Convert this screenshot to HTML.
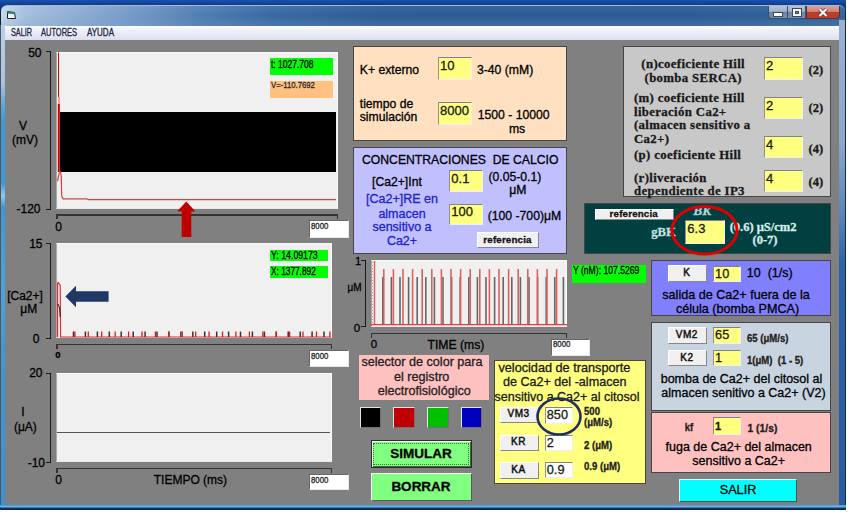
<!DOCTYPE html>
<html><head><meta charset="utf-8"><style>
*{box-sizing:border-box}
html,body{margin:0;padding:0}
body{width:850px;height:516px;overflow:hidden;background:#fff;position:relative;font-family:"Liberation Sans",sans-serif;color:#000}
.a{position:absolute}
.t{position:absolute;white-space:nowrap;line-height:1;-webkit-text-stroke:0.3px currentColor}
.plot{background:#f0f0f0;border-top:1px solid #fafafa;border-right:1px solid #fafafa;border-left:1px solid #a8a8a8;border-bottom:1px solid #e8e8e8}
.tb{background:#fff;border-top:1px solid #666;border-left:1px solid #666;border-right:1px solid #e8e8e8;border-bottom:1px solid #e8e8e8}
.inp{border-top:1px solid #808090;border-left:1px solid #909090;border-right:1px solid #f0f0f0;border-bottom:1px solid #f0f0f0}
.btn{border-top:1px solid #fff;border-left:1px solid #fff;border-right:1.5px solid #888;border-bottom:1.5px solid #888}
.panel{border:1px solid #464646}
</style></head><body>
<div class="a " style="left:0.00px;top:0.00px;width:846.00px;height:24.00px;background:linear-gradient(#1a52b0,#0e3c8c 20%,#0a3070 100%);"></div>
<div class="a " style="left:0.00px;top:4.50px;width:846.00px;height:505.50px;border-radius:7px 7px 0 0;background:#2a5a9a;border:1px solid #0c1e3c;"></div>
<div class="a " style="left:1.00px;top:5.00px;width:844.00px;height:20.50px;border-radius:6px 6px 0 0;border-top:1px solid #a0b4cc;background:linear-gradient(90deg,#c8d8ea 0,#a4bedc 3%,#8aaad2 10%,#6e94c4 17%,#4e7cb0 24%,#386aa2 32%,#2c5c94 45%,#2b5b93 80%,#33639a 100%);"></div>
<div class="a " style="left:1.00px;top:5.00px;width:844.00px;height:20.50px;border-radius:6px 6px 0 0;background:linear-gradient(rgba(255,255,255,.08),rgba(255,255,255,0) 50%,rgba(120,160,200,.25));"></div>
<div class="a " style="left:0.00px;top:25.00px;width:5.50px;height:480.00px;background:linear-gradient(#b8d0ea,#a8c4e4 12%,#6aaadc 16%,#3c98d8 20%,#3c98d8 33%,#90ccf0 35.5%,#3c98d8 38%,#48a4e0 55%,#3d96d6 70%,#3a92d4 100%);border-left:1px solid #555;"></div>
<div class="a " style="left:839.00px;top:20.00px;width:7.00px;height:485.00px;background:linear-gradient(#98b2d0,#8aa8c8 25%,#5a86b8 40%,#2f62a6 50%,#2a5aa0 100%);border-right:1.5px solid #1a2a48;"></div>
<svg class="a" style="left:6px;top:10px" width="11" height="10" viewBox="0 0 11 10"><path d="M1.5 1.5 L8.5 2.5 L9.5 8.5 L1.5 8.5 Z" fill="#f4f4f4" stroke="#222" stroke-width="1"/><path d="M1.5 1.5 L8.5 2.5 L8.8 4.3 L1.5 3.8Z" fill="#2a8a9a"/></svg>
<div class="a " style="left:767.50px;top:5.50px;width:38.50px;height:13.20px;border-radius:0 0 0 4px;border:1px solid #3c4c66;border-top:none;background:linear-gradient(#b4c4d8,#9fb2ca 45%,#6a84a8 50%,#7890b2);"></div>
<div class="a " style="left:787.00px;top:5.50px;width:1.00px;height:13.20px;background:#3c4c66;"></div>
<div class="a " style="left:806.00px;top:5.50px;width:33.70px;height:13.20px;border-radius:0 0 4px 0;border:1px solid #5a3030;border-top:none;background:linear-gradient(#d8a098,#cc8a80 45%,#bc3c26 52%,#b8402c);"></div>
<div class="a" style="left:774px;top:12.5px;width:8px;height:3px;background:#fff;box-shadow:0 0 0 1px #3a4a5a;"></div>
<div class="a" style="left:793px;top:8.5px;width:8px;height:7px;border:2px solid #f4f4f4;box-shadow:0 0 0 1px #3a4a5a, inset 0 0 0 1px #3a4a5a;"></div>
<svg class="a" style="left:816px;top:6.5px" width="14" height="11" viewBox="0 0 14 11"><path d="M3.5 2 L10.5 9 M10.5 2 L3.5 9" stroke="#5a3a3a" stroke-width="3.8"/><path d="M3.5 2 L10.5 9 M10.5 2 L3.5 9" stroke="#f4f4f4" stroke-width="2.2"/></svg>
<div class="a " style="left:5.00px;top:25.50px;width:834.00px;height:14.50px;background:linear-gradient(#fcfcfe,#eceef7 40%,#dcdff0);"></div>
<div class="t" style="left:10.50px;top:27.62px;font-family:'Liberation Sans',sans-serif;font-size:10px;font-weight:normal;color:#1b2540;transform:scaleX(0.73);transform-origin:0 0;">SALIR</div>
<div class="t" style="left:41.20px;top:27.62px;font-family:'Liberation Sans',sans-serif;font-size:10px;font-weight:normal;color:#1b2540;transform:scaleX(0.75);transform-origin:0 0;">AUTORES</div>
<div class="t" style="left:86.90px;top:27.62px;font-family:'Liberation Sans',sans-serif;font-size:10px;font-weight:normal;color:#1b2540;transform:scaleX(0.8);transform-origin:0 0;">AYUDA</div>
<div class="a " style="left:5.00px;top:40.00px;width:834.00px;height:465.00px;background:#808080;"></div>
<div class="a " style="left:0.00px;top:504.50px;width:846.00px;height:5.50px;background:linear-gradient(#4a9ad8,#6ab8f0 40%,#1a3a6a 60%,#0c1c38);border-radius:0 0 4px 4px;"></div>
<div class="a " style="left:50.00px;top:51.00px;width:1.00px;height:159.00px;background:#1a1a1a;"></div>
<div class="a " style="left:46.00px;top:51.00px;width:5.00px;height:1.00px;background:#1a1a1a;"></div>
<div class="a " style="left:46.00px;top:209.00px;width:5.00px;height:1.00px;background:#1a1a1a;"></div>
<div class="t" style="right:808.50px;top:47.14px;font-family:'Liberation Sans',sans-serif;font-size:12px;font-weight:normal;color:#000;">50</div>
<div class="t" style="right:809.50px;top:203.14px;font-family:'Liberation Sans',sans-serif;font-size:12px;font-weight:normal;color:#000;">-120</div>
<div class="t" style="left:23.00px;top:120.14px;font-family:'Liberation Sans',sans-serif;font-size:12px;font-weight:normal;color:#000;transform:translateX(-50%) ;transform-origin:0 0;">V</div>
<div class="t" style="left:25.00px;top:134.14px;font-family:'Liberation Sans',sans-serif;font-size:12px;font-weight:normal;color:#000;transform:translateX(-50%) ;transform-origin:0 0;">(mV)</div>
<div class="a plot" style="left:56.00px;top:52.00px;width:282.00px;height:157.00px;"></div>
<div class="a " style="left:60.00px;top:112.40px;width:276.00px;height:59.60px;background:#000;"></div>
<div class="a " style="left:270.30px;top:58.10px;width:63.00px;height:17.40px;background:#00ff00;"></div>
<div class="t" style="left:270.60px;top:60.02px;font-family:'Liberation Sans',sans-serif;font-size:10px;font-weight:normal;color:#000;transform:scaleX(0.85);transform-origin:0 0;">t: 1027.708</div>
<div class="a " style="left:270.30px;top:80.90px;width:63.00px;height:17.20px;background:#ffc080;"></div>
<div class="t" style="left:270.60px;top:81.46px;font-family:'Liberation Sans',sans-serif;font-size:9.3px;font-weight:normal;color:#2a2a2a;transform:scaleX(0.83);transform-origin:0 0;">V=-110.7692</div>
<div class="a " style="left:56.00px;top:214.00px;width:282.00px;height:1.50px;background:#333;"></div>
<div class="a " style="left:56.00px;top:214.00px;width:1.50px;height:5.00px;background:#333;"></div>
<div class="a " style="left:336.50px;top:214.00px;width:1.50px;height:5.00px;background:#333;"></div>
<div class="t" style="left:58.50px;top:221.14px;font-family:'Liberation Sans',sans-serif;font-size:12px;font-weight:normal;color:#000;transform:translateX(-50%) ;transform-origin:0 0;">0</div>
<div class="a tb" style="left:309.00px;top:220.00px;width:40.00px;height:18.00px;"></div>
<div class="t" style="left:311.00px;top:221.91px;font-family:'Liberation Sans',sans-serif;font-size:9px;font-weight:normal;color:#222;transform:scaleX(0.87);transform-origin:0 0;">8000</div>
<div class="a " style="left:50.00px;top:243.00px;width:1.00px;height:96.00px;background:#1a1a1a;"></div>
<div class="a " style="left:46.00px;top:243.00px;width:5.00px;height:1.00px;background:#1a1a1a;"></div>
<div class="a " style="left:46.00px;top:338.00px;width:5.00px;height:1.00px;background:#1a1a1a;"></div>
<div class="t" style="right:807.50px;top:238.14px;font-family:'Liberation Sans',sans-serif;font-size:12px;font-weight:normal;color:#000;">15</div>
<div class="t" style="right:810.50px;top:333.39px;font-family:'Liberation Sans',sans-serif;font-size:12px;font-weight:normal;color:#000;">0</div>
<div class="t" style="left:25.00px;top:289.64px;font-family:'Liberation Sans',sans-serif;font-size:12px;font-weight:normal;color:#000;transform:translateX(-50%) ;transform-origin:0 0;">[Ca2+]</div>
<div class="t" style="left:28.75px;top:303.14px;font-family:'Liberation Sans',sans-serif;font-size:12px;font-weight:normal;color:#000;transform:translateX(-50%) ;transform-origin:0 0;">μM</div>
<div class="a plot" style="left:56.00px;top:243.00px;width:276.00px;height:95.00px;"></div>
<div class="a " style="left:270.30px;top:250.00px;width:57.50px;height:11.00px;background:#00ff00;"></div>
<div class="t" style="left:270.60px;top:250.72px;font-family:'Liberation Sans',sans-serif;font-size:10px;font-weight:normal;color:#000;transform:scaleX(0.875);transform-origin:0 0;">Y: 14.09173</div>
<div class="a " style="left:270.30px;top:266.30px;width:57.50px;height:11.70px;background:#00ff00;"></div>
<div class="t" style="left:270.60px;top:267.12px;font-family:'Liberation Sans',sans-serif;font-size:10px;font-weight:normal;color:#000;transform:scaleX(0.83);transform-origin:0 0;">X: 1377.892</div>
<div class="a " style="left:56.00px;top:343.50px;width:276.00px;height:1.50px;background:#333;"></div>
<div class="a " style="left:56.00px;top:343.50px;width:1.50px;height:5.00px;background:#333;"></div>
<div class="a " style="left:330.50px;top:343.50px;width:1.50px;height:5.00px;background:#333;"></div>
<div class="t" style="left:58.00px;top:350.36px;font-family:'Liberation Sans',sans-serif;font-size:9.5px;font-weight:bold;color:#000;transform:translateX(-50%) ;transform-origin:0 0;">0</div>
<div class="a tb" style="left:309.00px;top:350.00px;width:40.00px;height:17.00px;"></div>
<div class="t" style="left:311.00px;top:351.91px;font-family:'Liberation Sans',sans-serif;font-size:9px;font-weight:normal;color:#222;transform:scaleX(0.87);transform-origin:0 0;">8000</div>
<div class="a " style="left:50.00px;top:373.00px;width:1.00px;height:90.00px;background:#1a1a1a;"></div>
<div class="a " style="left:46.00px;top:373.00px;width:5.00px;height:1.00px;background:#1a1a1a;"></div>
<div class="a " style="left:46.00px;top:462.00px;width:5.00px;height:1.00px;background:#1a1a1a;"></div>
<div class="t" style="right:807.50px;top:367.14px;font-family:'Liberation Sans',sans-serif;font-size:12px;font-weight:normal;color:#000;">20</div>
<div class="t" style="right:805.00px;top:457.39px;font-family:'Liberation Sans',sans-serif;font-size:12px;font-weight:normal;color:#000;">-10</div>
<div class="t" style="left:23.00px;top:406.14px;font-family:'Liberation Sans',sans-serif;font-size:12px;font-weight:normal;color:#000;transform:translateX(-50%) ;transform-origin:0 0;">I</div>
<div class="t" style="left:25.40px;top:421.14px;font-family:'Liberation Sans',sans-serif;font-size:12px;font-weight:normal;color:#000;transform:translateX(-50%) ;transform-origin:0 0;">(μA)</div>
<div class="a plot" style="left:56.00px;top:373.00px;width:276.00px;height:89.00px;"></div>
<div class="a " style="left:57.00px;top:431.50px;width:273.00px;height:1.20px;background:#555;"></div>
<div class="a " style="left:56.00px;top:467.50px;width:276.00px;height:1.50px;background:#333;"></div>
<div class="a " style="left:56.00px;top:467.50px;width:1.50px;height:5.00px;background:#333;"></div>
<div class="a " style="left:330.50px;top:467.50px;width:1.50px;height:5.00px;background:#333;"></div>
<div class="t" style="left:58.50px;top:474.14px;font-family:'Liberation Sans',sans-serif;font-size:12px;font-weight:normal;color:#000;transform:translateX(-50%) ;transform-origin:0 0;">0</div>
<div class="t" style="left:153.75px;top:474.14px;font-family:'Liberation Sans',sans-serif;font-size:12px;font-weight:normal;color:#000;">TIEMPO (ms)</div>
<div class="a tb" style="left:309.00px;top:474.00px;width:40.00px;height:16.00px;"></div>
<div class="t" style="left:311.00px;top:475.91px;font-family:'Liberation Sans',sans-serif;font-size:9px;font-weight:normal;color:#222;transform:scaleX(0.87);transform-origin:0 0;">8000</div>
<div class="a panel" style="left:353.00px;top:45.50px;width:214.00px;height:95.50px;background:#ffe0c0;"></div>
<div class="t" style="left:359.75px;top:63.55px;font-family:'Liberation Sans',sans-serif;font-size:12.2px;font-weight:normal;color:#000;">K+ externo</div>
<div class="a inp" style="left:437.75px;top:57.00px;width:33.75px;height:22.50px;background:#ffff80;"></div>
<div class="t" style="left:440.05px;top:58.86px;font-family:'Liberation Sans',sans-serif;font-size:13px;font-weight:normal;color:#1a1a10;">10</div>
<div class="t" style="left:477.00px;top:64.05px;font-family:'Liberation Sans',sans-serif;font-size:12.2px;font-weight:normal;color:#000;">3-40 (mM)</div>
<div class="t" style="left:359.75px;top:97.75px;font-family:'Liberation Sans',sans-serif;font-size:12.2px;font-weight:normal;color:#000;">tiempo de</div>
<div class="t" style="left:359.75px;top:110.75px;font-family:'Liberation Sans',sans-serif;font-size:12.2px;font-weight:normal;color:#000;">simulación</div>
<div class="a inp" style="left:437.75px;top:102.00px;width:33.75px;height:22.50px;background:#ffff80;"></div>
<div class="t" style="left:440.05px;top:103.86px;font-family:'Liberation Sans',sans-serif;font-size:13px;font-weight:normal;color:#1a1a10;">8000</div>
<div class="t" style="left:477.75px;top:108.55px;font-family:'Liberation Sans',sans-serif;font-size:12.2px;font-weight:normal;color:#000;">1500 - 10000</div>
<div class="t" style="left:517.00px;top:123.05px;font-family:'Liberation Sans',sans-serif;font-size:12.2px;font-weight:normal;color:#000;transform:translateX(-50%) ;transform-origin:0 0;">ms</div>
<div class="a panel" style="left:353.00px;top:147.00px;width:214.00px;height:106.50px;background:#c0c0ff;"></div>
<div class="t" style="left:362.00px;top:153.55px;font-family:'Liberation Sans',sans-serif;font-size:12.2px;font-weight:normal;color:#000;">CONCENTRACIONES&nbsp; DE CALCIO</div>
<div class="t" style="left:372.00px;top:176.05px;font-family:'Liberation Sans',sans-serif;font-size:12.2px;font-weight:normal;color:#000;">[Ca2+]Int</div>
<div class="a inp" style="left:449.00px;top:170.25px;width:33.75px;height:21.75px;background:#ffff80;"></div>
<div class="t" style="left:451.30px;top:172.11px;font-family:'Liberation Sans',sans-serif;font-size:13px;font-weight:normal;color:#1a1a10;">0.1</div>
<div class="t" style="left:488.50px;top:170.55px;font-family:'Liberation Sans',sans-serif;font-size:12.2px;font-weight:normal;color:#000;">(0.05-0.1)</div>
<div class="t" style="left:517.75px;top:184.05px;font-family:'Liberation Sans',sans-serif;font-size:12.2px;font-weight:normal;color:#000;transform:translateX(-50%) ;transform-origin:0 0;">μM</div>
<div class="t" style="left:402.00px;top:193.40px;font-family:'Liberation Sans',sans-serif;font-size:12.5px;font-weight:normal;color:#2222cc;transform:translateX(-50%) ;transform-origin:0 0;">[Ca2+]RE en</div>
<div class="t" style="left:402.00px;top:207.90px;font-family:'Liberation Sans',sans-serif;font-size:12.5px;font-weight:normal;color:#2222cc;transform:translateX(-50%) ;transform-origin:0 0;">almacen</div>
<div class="t" style="left:402.00px;top:220.90px;font-family:'Liberation Sans',sans-serif;font-size:12.5px;font-weight:normal;color:#2222cc;transform:translateX(-50%) ;transform-origin:0 0;">sensitivo a</div>
<div class="t" style="left:402.00px;top:235.40px;font-family:'Liberation Sans',sans-serif;font-size:12.5px;font-weight:normal;color:#2222cc;transform:translateX(-50%) ;transform-origin:0 0;">Ca2+</div>
<div class="a inp" style="left:449.00px;top:203.50px;width:33.75px;height:21.75px;background:#ffff80;"></div>
<div class="t" style="left:451.30px;top:205.36px;font-family:'Liberation Sans',sans-serif;font-size:13px;font-weight:normal;color:#1a1a10;">100</div>
<div class="t" style="left:487.75px;top:209.80px;font-family:'Liberation Sans',sans-serif;font-size:12.2px;font-weight:normal;color:#000;">(100 -700)μM</div>
<div class="a btn" style="left:477.00px;top:231.50px;width:62.00px;height:16.75px;background:#f0f0f0;"></div>
<div class="t" style="left:507.50px;top:234.59px;font-family:'Liberation Sans',sans-serif;font-size:9.8px;font-weight:bold;color:#111;letter-spacing:0.15px;transform:translateX(-50%) ;transform-origin:0 0;">referencia</div>
<div class="a " style="left:364.50px;top:259.50px;width:1.00px;height:67.50px;background:#1a1a1a;"></div>
<div class="a " style="left:361.00px;top:259.50px;width:4.50px;height:1.00px;background:#1a1a1a;"></div>
<div class="a " style="left:361.00px;top:326.00px;width:4.50px;height:1.00px;background:#1a1a1a;"></div>
<div class="t" style="left:358.00px;top:255.63px;font-family:'Liberation Sans',sans-serif;font-size:11px;font-weight:normal;color:#000;transform:translateX(-50%) ;transform-origin:0 0;">1</div>
<div class="t" style="left:357.00px;top:322.89px;font-family:'Liberation Sans',sans-serif;font-size:11.5px;font-weight:normal;color:#000;transform:translateX(-50%) ;transform-origin:0 0;">0</div>
<div class="t" style="left:354.60px;top:283.12px;font-family:'Liberation Sans',sans-serif;font-size:10px;font-weight:normal;color:#000;transform:translateX(-50%) ;transform-origin:0 0;">μM</div>
<div class="a plot" style="left:370.50px;top:260.00px;width:196.80px;height:66.50px;"></div>
<div class="a " style="left:370.50px;top:332.50px;width:196.80px;height:1.50px;background:#333;"></div>
<div class="a " style="left:370.50px;top:332.50px;width:1.50px;height:5.00px;background:#333;"></div>
<div class="a " style="left:565.80px;top:332.50px;width:1.50px;height:5.00px;background:#333;"></div>
<div class="t" style="left:373.90px;top:338.99px;font-family:'Liberation Sans',sans-serif;font-size:11.5px;font-weight:normal;color:#000;transform:translateX(-50%) ;transform-origin:0 0;">0</div>
<div class="t" style="left:427.50px;top:339.05px;font-family:'Liberation Sans',sans-serif;font-size:12.2px;font-weight:normal;color:#000;">TIME (ms)</div>
<div class="a tb" style="left:551.00px;top:338.50px;width:38.50px;height:17.00px;"></div>
<div class="t" style="left:553.00px;top:340.41px;font-family:'Liberation Sans',sans-serif;font-size:9px;font-weight:normal;color:#222;transform:scaleX(0.87);transform-origin:0 0;">8000</div>
<div class="a " style="left:572.00px;top:265.00px;width:74.00px;height:17.70px;background:#00ff00;"></div>
<div class="t" style="left:572.50px;top:266.12px;font-family:'Liberation Sans',sans-serif;font-size:10px;font-weight:normal;color:#000;transform:scaleX(0.86);transform-origin:0 0;">Y (nM): 107.5269</div>
<div class="a " style="left:358.60px;top:355.00px;width:130.70px;height:45.20px;background:#ffc0c0;"></div>
<div class="t" style="left:422.00px;top:356.35px;font-family:'Liberation Sans',sans-serif;font-size:12.6px;font-weight:normal;color:#222;transform:translateX(-50%) ;transform-origin:0 0;">selector de color para</div>
<div class="t" style="left:421.70px;top:370.60px;font-family:'Liberation Sans',sans-serif;font-size:12.6px;font-weight:normal;color:#222;transform:translateX(-50%) ;transform-origin:0 0;">el registro</div>
<div class="t" style="left:424.20px;top:384.60px;font-family:'Liberation Sans',sans-serif;font-size:12.6px;font-weight:normal;color:#222;transform:translateX(-50%) ;transform-origin:0 0;">electrofisiológico</div>
<div class="a " style="left:359.50px;top:406.50px;width:21.75px;height:21.25px;background:#000;border:1.5px solid #e4e4e4;border-right-color:#707070;border-bottom-color:#707070;"></div>
<div class="a " style="left:392.50px;top:406.50px;width:22.50px;height:21.25px;background:#c00000;border:1.5px solid #e4e4e4;border-right-color:#707070;border-bottom-color:#707070;"></div>
<div class="a " style="left:427.00px;top:406.50px;width:22.00px;height:21.25px;background:#00c000;border:1.5px solid #e4e4e4;border-right-color:#707070;border-bottom-color:#707070;"></div>
<div class="a " style="left:460.75px;top:406.50px;width:21.50px;height:21.25px;background:#0000c0;border:1.5px solid #e4e4e4;border-right-color:#707070;border-bottom-color:#707070;"></div>
<div class="a " style="left:370.50px;top:439.70px;width:101.00px;height:28.10px;background:#80ff80;border:1px solid #2a2a2a;box-shadow:inset 1px 1px #f0fff0, inset -1px -1px #3a6a3a;"></div>
<div class="a " style="left:373.30px;top:442.50px;width:95.40px;height:22.50px;border:1px dotted #446644;"></div>
<div class="t" style="left:421.00px;top:446.91px;font-family:'Liberation Sans',sans-serif;font-size:13.5px;font-weight:bold;color:#000;transform:translateX(-50%) ;transform-origin:0 0;">SIMULAR</div>
<div class="a " style="left:370.50px;top:473.30px;width:101.00px;height:27.90px;background:#80ff80;border-top:1.5px solid #f4f4f4;border-left:1.5px solid #f4f4f4;border-right:1.5px solid #5a5a5a;border-bottom:1.5px solid #5a5a5a;"></div>
<div class="t" style="left:421.00px;top:480.41px;font-family:'Liberation Sans',sans-serif;font-size:13.5px;font-weight:bold;color:#000;transform:translateX(-50%) ;transform-origin:0 0;">BORRAR</div>
<div class="a panel" style="left:493.50px;top:360.00px;width:152.10px;height:124.00px;background:#ffff80;"></div>
<div class="t" style="left:564.40px;top:361.80px;font-family:'Liberation Sans',sans-serif;font-size:12.7px;font-weight:normal;color:#1a1a1a;transform:translateX(-50%) ;transform-origin:0 0;">velocidad de transporte</div>
<div class="t" style="left:564.70px;top:375.60px;font-family:'Liberation Sans',sans-serif;font-size:12.6px;font-weight:normal;color:#1a1a1a;transform:translateX(-50%) ;transform-origin:0 0;">de Ca2+ del -almacen</div>
<div class="t" style="left:567.00px;top:390.90px;font-family:'Liberation Sans',sans-serif;font-size:12.5px;font-weight:normal;color:#1a1a1a;transform:translateX(-50%) ;transform-origin:0 0;">sensitivo a Ca2+ al citosol</div>
<div class="a btn" style="left:499.50px;top:406.50px;width:39.00px;height:16.25px;background:#f0f0f0;"></div>
<div class="t" style="left:518.50px;top:409.25px;font-family:'Liberation Sans',sans-serif;font-size:10px;font-weight:normal;color:#111;letter-spacing:0.5px;transform:translateX(-50%) ;transform-origin:0 0;-webkit-text-stroke:0.45px currentColor">VM3</div>
<div class="a inp" style="left:544.50px;top:406.50px;width:28.25px;height:17.50px;background:#fff;"></div>
<div class="t" style="left:546.80px;top:408.50px;font-family:'Liberation Sans',sans-serif;font-size:12.7px;font-weight:normal;color:#1a1a10;">850</div>
<div class="t" style="left:584.00px;top:407.42px;font-family:'Liberation Sans',sans-serif;font-size:10.4px;font-weight:bold;color:#222;transform:scaleX(0.92);transform-origin:0 0;">500</div>
<div class="t" style="left:584.00px;top:418.22px;font-family:'Liberation Sans',sans-serif;font-size:10.4px;font-weight:bold;color:#222;transform:scaleX(0.92);transform-origin:0 0;">(μM/s)</div>
<div class="a btn" style="left:499.50px;top:434.50px;width:39.00px;height:16.25px;background:#f0f0f0;"></div>
<div class="t" style="left:518.50px;top:437.25px;font-family:'Liberation Sans',sans-serif;font-size:10px;font-weight:normal;color:#111;letter-spacing:0.5px;transform:translateX(-50%) ;transform-origin:0 0;-webkit-text-stroke:0.45px currentColor">KR</div>
<div class="a inp" style="left:544.50px;top:434.50px;width:28.25px;height:16.25px;background:#fff;"></div>
<div class="t" style="left:546.80px;top:436.50px;font-family:'Liberation Sans',sans-serif;font-size:12.7px;font-weight:normal;color:#1a1a10;">2</div>
<div class="t" style="left:584.00px;top:440.62px;font-family:'Liberation Sans',sans-serif;font-size:10.4px;font-weight:bold;color:#222;transform:scaleX(0.92);transform-origin:0 0;">2 (μM)</div>
<div class="a btn" style="left:499.50px;top:462.00px;width:39.00px;height:17.00px;background:#f0f0f0;"></div>
<div class="t" style="left:518.50px;top:465.12px;font-family:'Liberation Sans',sans-serif;font-size:10px;font-weight:normal;color:#111;letter-spacing:0.5px;transform:translateX(-50%) ;transform-origin:0 0;-webkit-text-stroke:0.45px currentColor">KA</div>
<div class="a inp" style="left:544.50px;top:462.00px;width:28.25px;height:16.25px;background:#fff;"></div>
<div class="t" style="left:546.80px;top:464.00px;font-family:'Liberation Sans',sans-serif;font-size:12.7px;font-weight:normal;color:#1a1a10;">0.9</div>
<div class="t" style="left:584.00px;top:462.32px;font-family:'Liberation Sans',sans-serif;font-size:10.4px;font-weight:bold;color:#222;transform:scaleX(0.92);transform-origin:0 0;">0.9 (μM)</div>
<div class="a panel" style="left:622.75px;top:45.50px;width:208.25px;height:151.50px;background:#c8c8c8;"></div>
<div class="t" style="left:693.20px;top:58.32px;font-family:'Liberation Serif',serif;font-size:12.8px;font-weight:bold;color:#1a1a1a;letter-spacing:0.35px;transform:translateX(-50%) ;transform-origin:0 0;">(n)coeficiente Hill</div>
<div class="t" style="left:693.20px;top:71.92px;font-family:'Liberation Serif',serif;font-size:12.8px;font-weight:bold;color:#1a1a1a;letter-spacing:0.35px;transform:translateX(-50%) ;transform-origin:0 0;">(bomba SERCA)</div>
<div class="t" style="left:634.00px;top:92.42px;font-family:'Liberation Serif',serif;font-size:12.8px;font-weight:bold;color:#1a1a1a;letter-spacing:0.35px;">(m) coeficiente Hill</div>
<div class="t" style="left:634.00px;top:105.52px;font-family:'Liberation Serif',serif;font-size:12.8px;font-weight:bold;color:#1a1a1a;letter-spacing:0.35px;">liberación Ca2+</div>
<div class="t" style="left:634.00px;top:119.42px;font-family:'Liberation Serif',serif;font-size:12.8px;font-weight:bold;color:#1a1a1a;letter-spacing:0.35px;">(almacen sensitivo a</div>
<div class="t" style="left:634.00px;top:133.32px;font-family:'Liberation Serif',serif;font-size:12.8px;font-weight:bold;color:#1a1a1a;letter-spacing:0.35px;">Ca2+)</div>
<div class="t" style="left:634.00px;top:148.92px;font-family:'Liberation Serif',serif;font-size:12.8px;font-weight:bold;color:#1a1a1a;letter-spacing:0.35px;">(p) coeficiente Hill</div>
<div class="t" style="left:634.00px;top:171.62px;font-family:'Liberation Serif',serif;font-size:12.8px;font-weight:bold;color:#1a1a1a;letter-spacing:0.35px;">(r)liveración</div>
<div class="t" style="left:634.00px;top:184.92px;font-family:'Liberation Serif',serif;font-size:12.8px;font-weight:bold;color:#1a1a1a;letter-spacing:0.35px;">dependiente de IP3</div>
<div class="a inp" style="left:763.70px;top:57.40px;width:39.30px;height:22.60px;background:#ffff80;"></div>
<div class="t" style="left:766.00px;top:59.26px;font-family:'Liberation Sans',sans-serif;font-size:13px;font-weight:normal;color:#1a1a10;">2</div>
<div class="t" style="left:808.50px;top:63.67px;font-family:'Liberation Serif',serif;font-size:12.5px;font-weight:bold;color:#1a1a1a;">(2)</div>
<div class="a inp" style="left:763.70px;top:97.00px;width:39.30px;height:22.00px;background:#ffff80;"></div>
<div class="t" style="left:766.00px;top:98.86px;font-family:'Liberation Sans',sans-serif;font-size:13px;font-weight:normal;color:#1a1a10;">2</div>
<div class="t" style="left:808.50px;top:101.67px;font-family:'Liberation Serif',serif;font-size:12.5px;font-weight:bold;color:#1a1a1a;">(2)</div>
<div class="a inp" style="left:763.70px;top:136.00px;width:39.30px;height:22.00px;background:#ffff80;"></div>
<div class="t" style="left:766.00px;top:137.86px;font-family:'Liberation Sans',sans-serif;font-size:13px;font-weight:normal;color:#1a1a10;">4</div>
<div class="t" style="left:808.50px;top:142.67px;font-family:'Liberation Serif',serif;font-size:12.5px;font-weight:bold;color:#1a1a1a;">(4)</div>
<div class="a inp" style="left:763.70px;top:169.80px;width:39.30px;height:22.20px;background:#ffff80;"></div>
<div class="t" style="left:766.00px;top:171.66px;font-family:'Liberation Sans',sans-serif;font-size:13px;font-weight:normal;color:#1a1a10;">4</div>
<div class="t" style="left:808.50px;top:176.07px;font-family:'Liberation Serif',serif;font-size:12.5px;font-weight:bold;color:#1a1a1a;">(4)</div>
<div class="a panel" style="left:583.50px;top:202.75px;width:247.50px;height:50.95px;background:#004040;"></div>
<div class="a btn" style="left:594.75px;top:208.50px;width:79.05px;height:11.50px;background:#f0f0f0;"></div>
<div class="t" style="left:633.77px;top:208.97px;font-family:'Liberation Sans',sans-serif;font-size:9.8px;font-weight:bold;color:#111;letter-spacing:0.15px;transform:translateX(-50%) ;transform-origin:0 0;">referencia</div>
<div class="t" style="left:702.20px;top:204.46px;font-family:'Liberation Serif',serif;font-size:13.5px;font-weight:bold;color:#a8d8d8;font-style:italic;transform:translateX(-50%) ;transform-origin:0 0;">BK</div>
<div class="t" style="left:663.50px;top:225.92px;font-family:'Liberation Serif',serif;font-size:12.6px;font-weight:bold;color:#c4e0e0;transform:translateX(-50%) ;transform-origin:0 0;">gBK</div>
<div class="a inp" style="left:685.00px;top:220.20px;width:39.70px;height:24.20px;background:#ffff80;"></div>
<div class="t" style="left:687.30px;top:222.16px;font-family:'Liberation Sans',sans-serif;font-size:13px;font-weight:normal;color:#1a1a10;">6.3</div>
<div class="t" style="left:729.70px;top:220.87px;font-family:'Liberation Serif',serif;font-size:12.5px;font-weight:bold;color:#d8ecec;">(0.6) μS/cm2</div>
<div class="t" style="left:765.00px;top:234.27px;font-family:'Liberation Serif',serif;font-size:12.5px;font-weight:bold;color:#d8ecec;transform:translateX(-50%) ;transform-origin:0 0;">(0-7)</div>
<div class="a panel" style="left:651.00px;top:260.00px;width:180.00px;height:56.00px;background:#8080ff;"></div>
<div class="a btn" style="left:667.50px;top:265.00px;width:39.80px;height:17.00px;background:#f0f0f0;"></div>
<div class="t" style="left:686.90px;top:268.12px;font-family:'Liberation Sans',sans-serif;font-size:10px;font-weight:normal;color:#111;letter-spacing:0.5px;transform:translateX(-50%) ;transform-origin:0 0;-webkit-text-stroke:0.45px currentColor">K</div>
<div class="a inp" style="left:712.80px;top:265.50px;width:28.50px;height:16.90px;background:#ffff80;"></div>
<div class="t" style="left:715.10px;top:267.50px;font-family:'Liberation Sans',sans-serif;font-size:12.7px;font-weight:normal;color:#1a1a10;">10</div>
<div class="t" style="left:746.80px;top:266.50px;font-family:'Liberation Sans',sans-serif;font-size:12.5px;font-weight:normal;color:#000;">10&nbsp; (1/s)</div>
<div class="t" style="left:736.00px;top:289.15px;font-family:'Liberation Sans',sans-serif;font-size:12.6px;font-weight:normal;color:#000;transform:translateX(-50%) ;transform-origin:0 0;">salida de Ca2+ fuera de la</div>
<div class="t" style="left:737.50px;top:302.85px;font-family:'Liberation Sans',sans-serif;font-size:12.6px;font-weight:normal;color:#000;transform:translateX(-50%) ;transform-origin:0 0;">célula (bomba PMCA)</div>
<div class="a panel" style="left:651.00px;top:322.00px;width:180.00px;height:89.00px;background:#c8d4e0;"></div>
<div class="a btn" style="left:667.50px;top:327.30px;width:39.80px;height:16.30px;background:#f0f0f0;"></div>
<div class="t" style="left:686.90px;top:330.07px;font-family:'Liberation Sans',sans-serif;font-size:10px;font-weight:normal;color:#111;letter-spacing:0.5px;transform:translateX(-50%) ;transform-origin:0 0;-webkit-text-stroke:0.45px currentColor">VM2</div>
<div class="a inp" style="left:712.80px;top:327.30px;width:28.50px;height:16.30px;background:#ffff80;"></div>
<div class="t" style="left:715.10px;top:329.30px;font-family:'Liberation Sans',sans-serif;font-size:12.7px;font-weight:normal;color:#1a1a10;">65</div>
<div class="t" style="left:746.60px;top:333.62px;font-family:'Liberation Sans',sans-serif;font-size:10.4px;font-weight:bold;color:#222;transform:scaleX(0.92);transform-origin:0 0;">65 (μM/s)</div>
<div class="a btn" style="left:667.50px;top:350.00px;width:39.80px;height:16.30px;background:#f0f0f0;"></div>
<div class="t" style="left:686.90px;top:352.77px;font-family:'Liberation Sans',sans-serif;font-size:10px;font-weight:normal;color:#111;letter-spacing:0.5px;transform:translateX(-50%) ;transform-origin:0 0;-webkit-text-stroke:0.45px currentColor">K2</div>
<div class="a inp" style="left:712.80px;top:350.00px;width:28.50px;height:16.30px;background:#ffff80;"></div>
<div class="t" style="left:715.10px;top:352.00px;font-family:'Liberation Sans',sans-serif;font-size:12.7px;font-weight:normal;color:#1a1a10;">1</div>
<div class="t" style="left:746.60px;top:356.42px;font-family:'Liberation Sans',sans-serif;font-size:10.4px;font-weight:bold;color:#222;transform:scaleX(0.92);transform-origin:0 0;">1(μM)&nbsp; (1 - 5)</div>
<div class="t" style="left:741.50px;top:373.30px;font-family:'Liberation Sans',sans-serif;font-size:12.5px;font-weight:normal;color:#000;transform:translateX(-50%) ;transform-origin:0 0;">bomba de Ca2+ del citosol al</div>
<div class="t" style="left:743.50px;top:387.20px;font-family:'Liberation Sans',sans-serif;font-size:12.5px;font-weight:normal;color:#000;transform:translateX(-50%) ;transform-origin:0 0;">almacen senitivo a Ca2+ (V2)</div>
<div class="a panel" style="left:651.00px;top:411.70px;width:180.00px;height:61.40px;background:#ffc0c0;"></div>
<div class="t" style="left:689.00px;top:423.42px;font-family:'Liberation Sans',sans-serif;font-size:10.4px;font-weight:bold;color:#222;transform:translateX(-50%) scaleX(0.92);transform-origin:50% 0;">kf</div>
<div class="a inp" style="left:712.60px;top:417.30px;width:28.30px;height:17.60px;background:#ffff80;"></div>
<div class="t" style="left:714.90px;top:421.03px;font-family:'Liberation Sans',sans-serif;font-size:11px;font-weight:bold;color:#1a1a10;">1</div>
<div class="t" style="left:747.40px;top:423.52px;font-family:'Liberation Sans',sans-serif;font-size:10.2px;font-weight:bold;color:#222;letter-spacing:0.1px;">1 (1/s)</div>
<div class="t" style="left:738.70px;top:440.90px;font-family:'Liberation Sans',sans-serif;font-size:12.5px;font-weight:normal;color:#000;transform:translateX(-50%) ;transform-origin:0 0;">fuga de Ca2+ del almacen</div>
<div class="t" style="left:738.70px;top:454.70px;font-family:'Liberation Sans',sans-serif;font-size:12.5px;font-weight:normal;color:#000;transform:translateX(-50%) ;transform-origin:0 0;">sensitivo a Ca2+</div>
<div class="a " style="left:678.80px;top:479.00px;width:118.40px;height:22.60px;background:#00ffff;border-top:1px solid #e0ffff;border-left:1px solid #e0ffff;border-right:1px solid #505050;border-bottom:1px solid #505050;"></div>
<div class="t" style="left:738.00px;top:484.10px;font-family:'Liberation Sans',sans-serif;font-size:12.7px;font-weight:normal;color:#000;transform:translateX(-50%) ;transform-origin:0 0;">SALIR</div>
<svg class="a" style="left:0;top:0" width="850" height="516" viewBox="0 0 850 516">
<path d="M58.5 52.5 L58.5 100" stroke="#e00000" stroke-width="1"/>
<path d="M59 97 L59 112" stroke="#f0a0a0" stroke-width="2"/>
<path d="M58.8 104 L58.8 172" stroke="#d00000" stroke-width="2"/>
<path d="M57.5 181 L59 174 L60.5 172 L61.3 176 L61.7 196 L63 198.8 L87 198.8 L88 199.6 L336 199.6" fill="none" stroke="#d84040" stroke-width="1.2"/>
<path d="M57.6 337 L57.6 283 L58.4 282.5 L60.2 285.5 L60.6 337 L331 337" fill="none" stroke="#d83030" stroke-width="1.2"/>
<path d="M58 304 L59.6 308 L60.2 317" fill="none" stroke="#222" stroke-width="1"/>
<line x1="73.5" y1="331.5" x2="73.5" y2="337" stroke="#333" stroke-width="1.5"/>
<line x1="85.4" y1="331.5" x2="85.4" y2="337" stroke="#333" stroke-width="1.5"/>
<line x1="97.4" y1="331.5" x2="97.4" y2="337" stroke="#333" stroke-width="1.5"/>
<line x1="109.3" y1="331.5" x2="109.3" y2="337" stroke="#333" stroke-width="1.5"/>
<line x1="121.2" y1="331.5" x2="121.2" y2="337" stroke="#333" stroke-width="1.5"/>
<line x1="133.2" y1="331.5" x2="133.2" y2="337" stroke="#333" stroke-width="1.5"/>
<line x1="145.1" y1="331.5" x2="145.1" y2="337" stroke="#333" stroke-width="1.5"/>
<line x1="157.0" y1="331.5" x2="157.0" y2="337" stroke="#333" stroke-width="1.5"/>
<line x1="168.9" y1="331.5" x2="168.9" y2="337" stroke="#333" stroke-width="1.5"/>
<line x1="180.9" y1="331.5" x2="180.9" y2="337" stroke="#333" stroke-width="1.5"/>
<line x1="192.8" y1="331.5" x2="192.8" y2="337" stroke="#333" stroke-width="1.5"/>
<line x1="204.7" y1="331.5" x2="204.7" y2="337" stroke="#333" stroke-width="1.5"/>
<line x1="216.7" y1="331.5" x2="216.7" y2="337" stroke="#333" stroke-width="1.5"/>
<line x1="228.6" y1="331.5" x2="228.6" y2="337" stroke="#333" stroke-width="1.5"/>
<line x1="240.5" y1="331.5" x2="240.5" y2="337" stroke="#333" stroke-width="1.5"/>
<line x1="252.4" y1="331.5" x2="252.4" y2="337" stroke="#333" stroke-width="1.5"/>
<line x1="264.4" y1="331.5" x2="264.4" y2="337" stroke="#333" stroke-width="1.5"/>
<line x1="276.3" y1="331.5" x2="276.3" y2="337" stroke="#333" stroke-width="1.5"/>
<line x1="288.2" y1="331.5" x2="288.2" y2="337" stroke="#333" stroke-width="1.5"/>
<line x1="300.2" y1="331.5" x2="300.2" y2="337" stroke="#333" stroke-width="1.5"/>
<line x1="312.1" y1="331.5" x2="312.1" y2="337" stroke="#333" stroke-width="1.5"/>
<line x1="324.0" y1="331.5" x2="324.0" y2="337" stroke="#333" stroke-width="1.5"/>
<line x1="74.9" y1="331.5" x2="74.9" y2="337" stroke="#d02020" stroke-width="1.3"/>
<line x1="88.3" y1="331.5" x2="88.3" y2="337" stroke="#d02020" stroke-width="1.3"/>
<line x1="101.7" y1="331.5" x2="101.7" y2="337" stroke="#d02020" stroke-width="1.3"/>
<line x1="115.2" y1="331.5" x2="115.2" y2="337" stroke="#d02020" stroke-width="1.3"/>
<line x1="128.6" y1="331.5" x2="128.6" y2="337" stroke="#d02020" stroke-width="1.3"/>
<line x1="142.0" y1="331.5" x2="142.0" y2="337" stroke="#d02020" stroke-width="1.3"/>
<line x1="155.4" y1="331.5" x2="155.4" y2="337" stroke="#d02020" stroke-width="1.3"/>
<line x1="168.8" y1="331.5" x2="168.8" y2="337" stroke="#d02020" stroke-width="1.3"/>
<line x1="182.3" y1="331.5" x2="182.3" y2="337" stroke="#d02020" stroke-width="1.3"/>
<line x1="195.7" y1="331.5" x2="195.7" y2="337" stroke="#d02020" stroke-width="1.3"/>
<line x1="209.1" y1="331.5" x2="209.1" y2="337" stroke="#d02020" stroke-width="1.3"/>
<line x1="222.5" y1="331.5" x2="222.5" y2="337" stroke="#d02020" stroke-width="1.3"/>
<line x1="235.9" y1="331.5" x2="235.9" y2="337" stroke="#d02020" stroke-width="1.3"/>
<line x1="249.4" y1="331.5" x2="249.4" y2="337" stroke="#d02020" stroke-width="1.3"/>
<line x1="262.8" y1="331.5" x2="262.8" y2="337" stroke="#d02020" stroke-width="1.3"/>
<line x1="276.2" y1="331.5" x2="276.2" y2="337" stroke="#d02020" stroke-width="1.3"/>
<line x1="289.6" y1="331.5" x2="289.6" y2="337" stroke="#d02020" stroke-width="1.3"/>
<line x1="303.0" y1="331.5" x2="303.0" y2="337" stroke="#d02020" stroke-width="1.3"/>
<line x1="316.5" y1="331.5" x2="316.5" y2="337" stroke="#d02020" stroke-width="1.3"/>
<line x1="329.9" y1="331.5" x2="329.9" y2="337" stroke="#d02020" stroke-width="1.3"/>
<path d="M65.4 296.5 L76 285.8 L76 291.2 L108.6 291.2 L108.6 301.8 L76 301.8 L76 307.2 Z" fill="#1f3864"/>
<path d="M186.3 201.5 L195.5 211.5 L191.3 211.5 L191.3 237 L181.7 237 L181.7 211.5 L177 211.5 Z" fill="#c00000"/>
<path d="M372.3 262 L372.3 325" stroke="#e08080" stroke-width="1" stroke-dasharray="1 2"/>
<path d="M374.5 261 L374.5 325" stroke="#e06060" stroke-width="1.5"/>
<line x1="382.8" y1="277" x2="382.8" y2="325" stroke="#666" stroke-width="1.6"/>
<line x1="391.4" y1="277" x2="391.4" y2="325" stroke="#666" stroke-width="1.6"/>
<line x1="400.0" y1="277" x2="400.0" y2="325" stroke="#666" stroke-width="1.6"/>
<line x1="408.6" y1="277" x2="408.6" y2="325" stroke="#666" stroke-width="1.6"/>
<line x1="417.2" y1="277" x2="417.2" y2="325" stroke="#666" stroke-width="1.6"/>
<line x1="425.8" y1="277" x2="425.8" y2="325" stroke="#666" stroke-width="1.6"/>
<line x1="434.4" y1="277" x2="434.4" y2="325" stroke="#666" stroke-width="1.6"/>
<line x1="443.0" y1="277" x2="443.0" y2="325" stroke="#666" stroke-width="1.6"/>
<line x1="451.6" y1="277" x2="451.6" y2="325" stroke="#666" stroke-width="1.6"/>
<line x1="460.2" y1="277" x2="460.2" y2="325" stroke="#666" stroke-width="1.6"/>
<line x1="468.8" y1="277" x2="468.8" y2="325" stroke="#666" stroke-width="1.6"/>
<line x1="477.4" y1="277" x2="477.4" y2="325" stroke="#666" stroke-width="1.6"/>
<line x1="486.0" y1="277" x2="486.0" y2="325" stroke="#666" stroke-width="1.6"/>
<line x1="494.6" y1="277" x2="494.6" y2="325" stroke="#666" stroke-width="1.6"/>
<line x1="503.2" y1="277" x2="503.2" y2="325" stroke="#666" stroke-width="1.6"/>
<line x1="511.8" y1="277" x2="511.8" y2="325" stroke="#666" stroke-width="1.6"/>
<line x1="520.4" y1="277" x2="520.4" y2="325" stroke="#666" stroke-width="1.6"/>
<line x1="529.0" y1="277" x2="529.0" y2="325" stroke="#666" stroke-width="1.6"/>
<line x1="537.6" y1="277" x2="537.6" y2="325" stroke="#666" stroke-width="1.6"/>
<line x1="546.2" y1="277" x2="546.2" y2="325" stroke="#666" stroke-width="1.6"/>
<line x1="554.8" y1="277" x2="554.8" y2="325" stroke="#666" stroke-width="1.6"/>
<line x1="563.4" y1="277" x2="563.4" y2="325" stroke="#666" stroke-width="1.6"/>
<line x1="383.8" y1="269" x2="383.8" y2="325" stroke="#e06060" stroke-width="1.6"/>
<line x1="393.4" y1="269" x2="393.4" y2="325" stroke="#e06060" stroke-width="1.6"/>
<line x1="403.0" y1="269" x2="403.0" y2="325" stroke="#e06060" stroke-width="1.6"/>
<line x1="412.6" y1="269" x2="412.6" y2="325" stroke="#e06060" stroke-width="1.6"/>
<line x1="422.2" y1="269" x2="422.2" y2="325" stroke="#e06060" stroke-width="1.6"/>
<line x1="431.8" y1="269" x2="431.8" y2="325" stroke="#e06060" stroke-width="1.6"/>
<line x1="441.4" y1="269" x2="441.4" y2="325" stroke="#e06060" stroke-width="1.6"/>
<line x1="451.0" y1="269" x2="451.0" y2="325" stroke="#e06060" stroke-width="1.6"/>
<line x1="460.6" y1="269" x2="460.6" y2="325" stroke="#e06060" stroke-width="1.6"/>
<line x1="470.2" y1="269" x2="470.2" y2="325" stroke="#e06060" stroke-width="1.6"/>
<line x1="479.8" y1="269" x2="479.8" y2="325" stroke="#e06060" stroke-width="1.6"/>
<line x1="489.4" y1="269" x2="489.4" y2="325" stroke="#e06060" stroke-width="1.6"/>
<line x1="499.0" y1="269" x2="499.0" y2="325" stroke="#e06060" stroke-width="1.6"/>
<line x1="508.6" y1="269" x2="508.6" y2="325" stroke="#e06060" stroke-width="1.6"/>
<line x1="518.2" y1="269" x2="518.2" y2="325" stroke="#e06060" stroke-width="1.6"/>
<line x1="527.8" y1="269" x2="527.8" y2="325" stroke="#e06060" stroke-width="1.6"/>
<line x1="537.4" y1="269" x2="537.4" y2="325" stroke="#e06060" stroke-width="1.6"/>
<line x1="547.0" y1="269" x2="547.0" y2="325" stroke="#e06060" stroke-width="1.6"/>
<line x1="556.6" y1="269" x2="556.6" y2="325" stroke="#e06060" stroke-width="1.6"/>
<path d="M371 324.6 L567 324.6" stroke="#d84040" stroke-width="1.2"/>
<ellipse cx="559" cy="416.5" rx="21.5" ry="18" fill="none" stroke="#1f3060" stroke-width="2.6"/>
<ellipse cx="704.5" cy="230.3" rx="32.6" ry="23.8" fill="none" stroke="#e00000" stroke-width="3"/>
</svg>
</body></html>
